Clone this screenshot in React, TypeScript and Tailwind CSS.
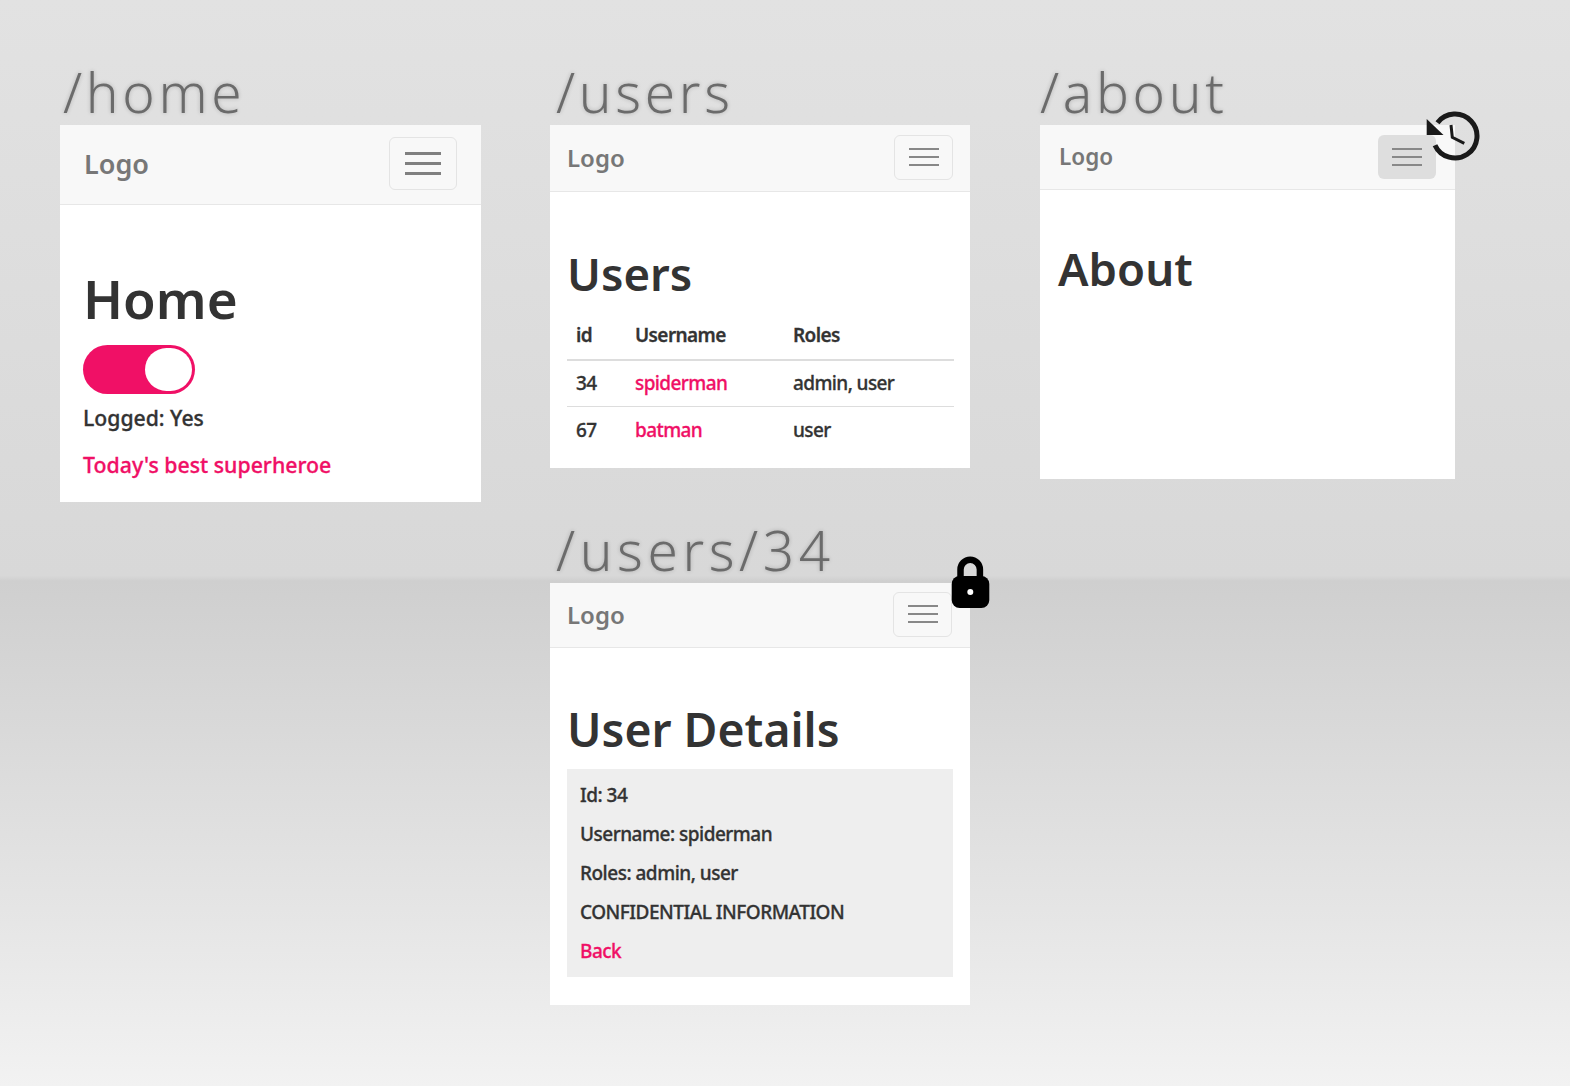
import React from 'react';

function Burger({ big, active, className }: { big?: boolean; active?: boolean; className?: string }) {
  const bar = big ? 'w-[36px] h-[3px] bg-[#808080]' : 'w-[30px] h-[2px] bg-[#888]';
  let box = 'flex flex-col items-center justify-center gap-[6px] w-[59px] h-[45px] border border-[#e4e4e4] rounded-md';
  if (big) box = 'flex flex-col items-center justify-center gap-[7px] w-[68px] h-[53px] border border-[#e4e4e4] rounded-md';
  if (active) box = 'flex flex-col items-center justify-center gap-[6px] w-[58px] h-[44px] bg-[#dedede] rounded-md';
  return (
    <div className={`${box} ${className || ''}`}>
      <div className={bar} />
      <div className={bar} />
      <div className={bar} />
    </div>
  );
}

function Label({ text, className }: { text: string; className: string }) {
  return (
    <div className={`h-[61px] text-[55px] leading-none tracking-[3.7px] font-light text-[#6b6b6b] [text-shadow:0_0_4px_rgba(0,0,0,0.2)] ${className}`}>
      {text}
    </div>
  );
}

function Nav({ className, logo, burger }: { className: string; logo: string; burger: React.ReactNode }) {
  return (
    <div className={`bg-[#f8f8f8] border-b border-[#e7e7e7] flex items-center justify-between ${className}`}>
      <span className={`font-semibold text-[#777] ${logo}`}>Logo</span>
      {burger}
    </div>
  );
}

function HistoryIcon() {
  return (
    <svg className="absolute left-[385px] top-[-15px]" width="56" height="52" viewBox="0 0 56 52" fill="none">
      <path d="M12.5 12.7A22 22 0 1 1 10 35.2" stroke="#1a1a1a" strokeWidth="5" />
      <path d="M1.7 9V25H18.5Z" fill="#1a1a1a" />
      <path d="M26 15L27.3 27.3L39.3 33.3" stroke="#1a1a1a" strokeWidth="3" />
    </svg>
  );
}

function LockIcon() {
  return (
    <svg className="absolute left-[400px] top-[-27px]" width="40" height="52" viewBox="0 0 40 52" fill="none">
      <path d="M10.5 24V13.5a9.7 9.7 0 0 1 19.4 0V24" stroke="#000" strokeWidth="6.5" />
      <rect x="1.7" y="20" width="37.6" height="32" rx="8" fill="#000" />
      <circle cx="20.3" cy="36" r="3" fill="#fff" />
    </svg>
  );
}

export default function App() {
  const font = { fontFamily: '"Noto Sans", "Open Sans", sans-serif' };
  const th = 'text-left font-semibold pb-[9px] pl-[9px]';
  const td = 'pl-[9px] h-[47px]';
  const pink = 'text-[#f01066]';
  const heavy = '[-webkit-text-stroke:0.3px_currentColor]';
  return (
    <div style={font} className="w-[1570px] h-[1086px] overflow-hidden flex gap-[69px] pl-[60px] pt-[64px] bg-[linear-gradient(#e2e2e2_0%,#d8d8d8_53%,#cfcfcf_53.5%,#e6e6e6_85%,#f2f2f2_100%)]">
      {/* home */}
      <div className="w-[421px]">
        <Label text="/home" className="pl-[3px]" />
        <div className="bg-white h-[377px]">
          <Nav className="h-[80px] px-[24px]" logo="text-[27px]" burger={<Burger big className="mb-[3px]" />} />
          <div className="px-[23px] pt-[56px] text-[#333]">
            <h1 className="text-[53px] leading-[76px] font-semibold">Home</h1>
            <div className="mt-[8px] w-[112px] h-[49px] rounded-full bg-[#f01066] p-[3px] flex justify-end">
              <div className="w-[47px] h-[43px] rounded-full bg-white" />
            </div>
            <p className={`mt-[9px] text-[21.2px] leading-[30px] font-medium ${heavy}`}>Logged: Yes</p>
            <a className={`block mt-[17px] text-[21.3px] leading-[30px] font-medium ${heavy} ${pink}`}>Today's best superheroe</a>
          </div>
        </div>
      </div>

      {/* users + details */}
      <div className="w-[420px]">
        <Label text="/users" className="pl-[6px]" />
        <div className="bg-white h-[343px]">
          <Nav className="h-[67px] pl-[17px] pr-[17px]" logo="text-[24px]" burger={<Burger className="mb-[2px]" />} />
          <div className="pl-[17px] pr-[16px] pt-[48px] text-[#333]">
            <h1 className="text-[45.5px] leading-[66px] font-semibold">Users</h1>
            <table className={`mt-[15px] w-full text-[19px] tracking-[-0.6px] font-medium border-collapse ${heavy}`}>
              <thead>
                <tr className="border-b-2 border-[#ddd]">
                  <th className={`${th} w-[59px]`}>id</th>
                  <th className={`${th} w-[158px]`}>Username</th>
                  <th className={th}>Roles</th>
                </tr>
              </thead>
              <tbody>
                <tr className="border-b border-[#ddd]">
                  <td className={td}>34</td>
                  <td className={`${td} ${pink}`}>spiderman</td>
                  <td className={td}>admin, user</td>
                </tr>
                <tr>
                  <td className={td}>67</td>
                  <td className={`${td} ${pink}`}>batman</td>
                  <td className={td}>user</td>
                </tr>
              </tbody>
            </table>
          </div>
        </div>

        <Label text="/users/34" className="pl-[6px] mt-[54px] tracking-[4.6px]!" />
        <div className="relative bg-white h-[422px]">
          <Nav className="h-[65px] pl-[17px] pr-[18px]" logo="text-[24px]" burger={<Burger className="mb-[2px]" />} />
          <LockIcon />
          <div className="pl-[17px] pr-[17px] pt-[49px] text-[#333]">
            <h1 className="text-[46.3px] leading-[66px] font-semibold">User Details</h1>
            <div className={`mt-[6px] h-[208px] bg-[#eeeeee] pl-[13px] pt-[7px] text-[19px] tracking-[-0.5px] leading-[39px] font-medium ${heavy}`}>
              <p>Id: 34</p>
              <p>Username: spiderman</p>
              <p>Roles: admin, user</p>
              <p>CONFIDENTIAL INFORMATION</p>
              <a className={pink}>Back</a>
            </div>
          </div>
        </div>
      </div>

      {/* about */}
      <div className="w-[415px] ml-[1px]">
        <Label text="/about" className="" />
        <div className="relative bg-white h-[354px]">
          <Nav className="h-[65px] pl-[19px] pr-[19px]" logo="text-[22.5px]" burger={<Burger active />} />
          <HistoryIcon />
          <div className="pl-[18px] pt-[45px] text-[#333]">
            <h1 className="text-[45.5px] leading-[66px] font-semibold">About</h1>
          </div>
        </div>
      </div>
    </div>
  );
}
